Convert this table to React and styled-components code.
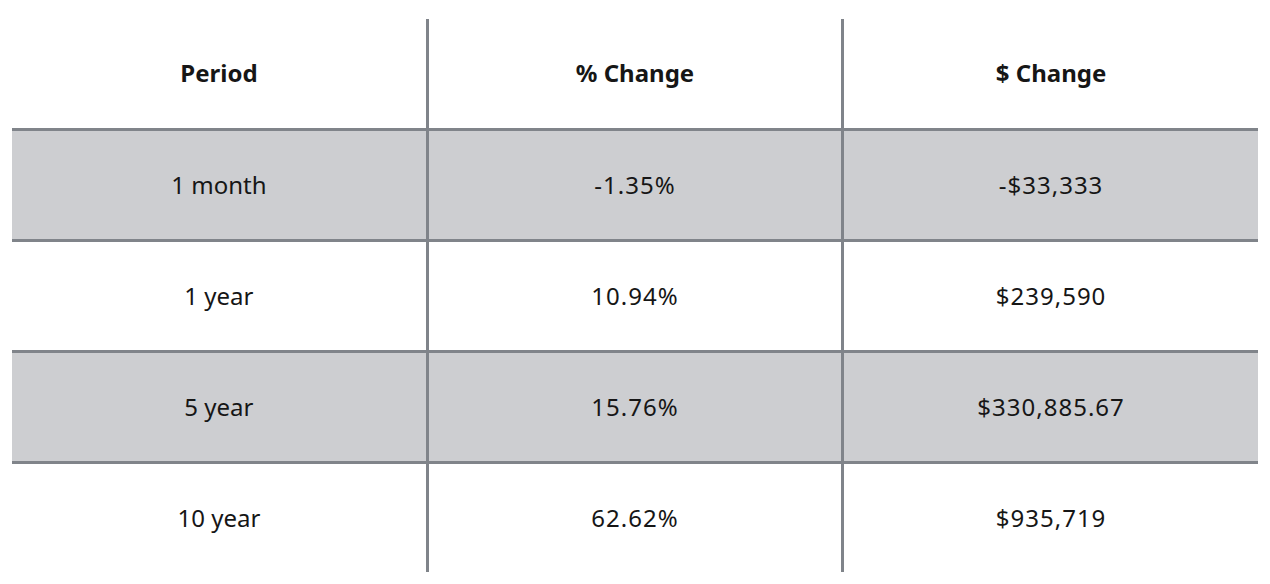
import React from "react";
import styled, { createGlobalStyle } from "styled-components";

const rows = [
  { period: "1 month", pct: "-1.35%", amount: "-$33,333" },
  { period: "1 year", pct: "10.94%", amount: "$239,590" },
  { period: "5 year", pct: "15.76%", amount: "$330,885.67" },
  { period: "10 year", pct: "62.62%", amount: "$935,719" },
];

const GlobalStyle = createGlobalStyle`
  html, body {
    margin: 0;
    padding: 0;
    background: #ffffff;
  }

  body {
    font-family: "Noto Sans", "Open Sans", sans-serif;
    color: #161616;
  }
`;

function App() {
  return (
    <>
      <GlobalStyle />
      <Page>
        <Table>
          <thead>
            <tr>
              <HeadCell>Period</HeadCell>
              <HeadCell>% Change</HeadCell>
              <HeadCell>$ Change</HeadCell>
            </tr>
          </thead>
          <tbody>
            {rows.map((row, i) => (
              <Row key={row.period} $shaded={i % 2 === 0}>
                <Cell>{row.period}</Cell>
                <Cell $numeric>{row.pct}</Cell>
                <Cell $numeric>{row.amount}</Cell>
              </Row>
            ))}
          </tbody>
        </Table>
      </Page>
    </>
  );
}

export default App;

const Page = styled.div`
  padding: 19px 12px 12px 12px;
`;

const Table = styled.table`
  width: 100%;
  border-collapse: collapse;
  table-layout: fixed;
  font-size: 24px;
  line-height: 1.2;
`;

const HeadCell = styled.th`
  height: 109px;
  padding: 0;
  font-weight: 700;
  text-align: center;
  vertical-align: middle;
  border-right: 3px solid #80848a;
  border-bottom: 3px solid #80848a;

  &:last-child {
    border-right: none;
  }
`;

const Row = styled.tr`
  background: ${(p) => (p.$shaded ? "#cdced1" : "#ffffff")};
  border-bottom: 3px solid #80848a;

  &:last-child {
    border-bottom: none;
  }
`;

const Cell = styled.td`
  height: 108px;
  padding: 0;
  text-align: center;
  vertical-align: middle;
  letter-spacing: ${(p) => (p.$numeric ? "1px" : "0")};
  border-right: 3px solid #80848a;

  &:last-child {
    border-right: none;
  }
`;
